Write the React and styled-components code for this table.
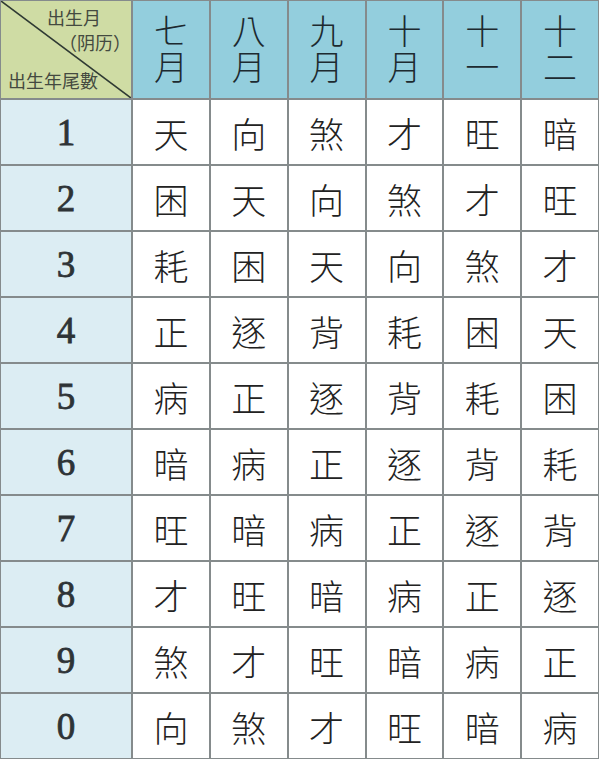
import React from "react";
import styled, { createGlobalStyle } from "styled-components";

const Global = createGlobalStyle`
  html, body { margin: 0; padding: 0; background: #ffffff; }
  #root { width: 600px; height: 761px; }
`;

const Table = styled.div`
  display: grid;
  width: 599px;
  box-sizing: border-box;
  grid-template-columns: 130px repeat(6, 1fr);
  grid-template-rows: 97px repeat(10, 64px);
  gap: 2px;
  padding: 1px;
  background: #858b8c;
`;

const Corner = styled.div`
  position: relative;
  background: #cfdca4;
  display: flex;
  flex-direction: column;
  font-family: "Noto Sans CJK TC", "Noto Sans CJK SC", sans-serif;
  font-size: 18px;
  color: #444a40;
  line-height: 1;
`;

const CornerLine = styled.div`
  align-self: ${(p) => (p.$left ? "flex-start" : "flex-end")};
  margin-top: ${(p) => p.$top}px;
  padding-left: ${(p) => p.$pl || 0}px;
  padding-right: ${(p) => p.$pr || 0}px;
  white-space: nowrap;
  position: relative;
  z-index: 1;
`;

const Diagonal = styled.svg`
  position: absolute;
  inset: 0;
  width: 100%;
  height: 100%;
`;

const MonthHead = styled.div`
  background: #93cedd;
  display: flex;
  flex-direction: column;
  align-items: center;
  justify-content: center;
  font-family: "Noto Sans CJK TC", "Noto Sans CJK SC", sans-serif;
  font-weight: 300;
  font-size: 34px;
  line-height: 36px;
  color: #1d2a30;
  padding-bottom: 4px;
`;

const NumCell = styled.div`
  background: #dcedf3;
  display: flex;
  align-items: center;
  justify-content: center;
  font-family: "Liberation Serif", serif;
  font-size: 37px;
  font-weight: 400;
  -webkit-text-stroke: 0.8px #2e3336;
  color: #2e3336;
`;

const Cell = styled.div`
  background: #ffffff;
  display: flex;
  align-items: center;
  justify-content: center;
  font-family: "Noto Sans CJK TC", "Noto Sans CJK SC", sans-serif;
  font-weight: 300;
  font-size: 35px;
  color: #222;
`;

const months = [
  ["七", "月"],
  ["八", "月"],
  ["九", "月"],
  ["十", "月"],
  ["十", "一"],
  ["十", "二"],
];

const rows = [
  ["1", "天向煞才旺暗"],
  ["2", "困天向煞才旺"],
  ["3", "耗困天向煞才"],
  ["4", "正逐背耗困天"],
  ["5", "病正逐背耗困"],
  ["6", "暗病正逐背耗"],
  ["7", "旺暗病正逐背"],
  ["8", "才旺暗病正逐"],
  ["9", "煞才旺暗病正"],
  ["0", "向煞才旺暗病"],
];

export default function App() {
  return (
    <>
      <Global />
      <Table>
        <Corner>
          <Diagonal viewBox="0 0 130 97" preserveAspectRatio="none">
            <line x1="0" y1="0" x2="130" y2="97" stroke="#2f3a33" strokeWidth="1.6" />
          </Diagonal>
          <CornerLine $top={7} $pr={30}>出生月</CornerLine>
          <CornerLine $top={7} $pr={0}>（阴历）</CornerLine>
          <CornerLine $left $top={20} $pl={7}>出生年尾數</CornerLine>
        </Corner>
        {months.map((m, i) => (
          <MonthHead key={i}>
            <span>{m[0]}</span>
            <span>{m[1]}</span>
          </MonthHead>
        ))}
        {rows.map(([n, chars]) => (
          <React.Fragment key={n}>
            <NumCell>{n}</NumCell>
            {chars.split("").map((c, j) => (
              <Cell key={j}>{c}</Cell>
            ))}
          </React.Fragment>
        ))}
      </Table>
    </>
  );
}
